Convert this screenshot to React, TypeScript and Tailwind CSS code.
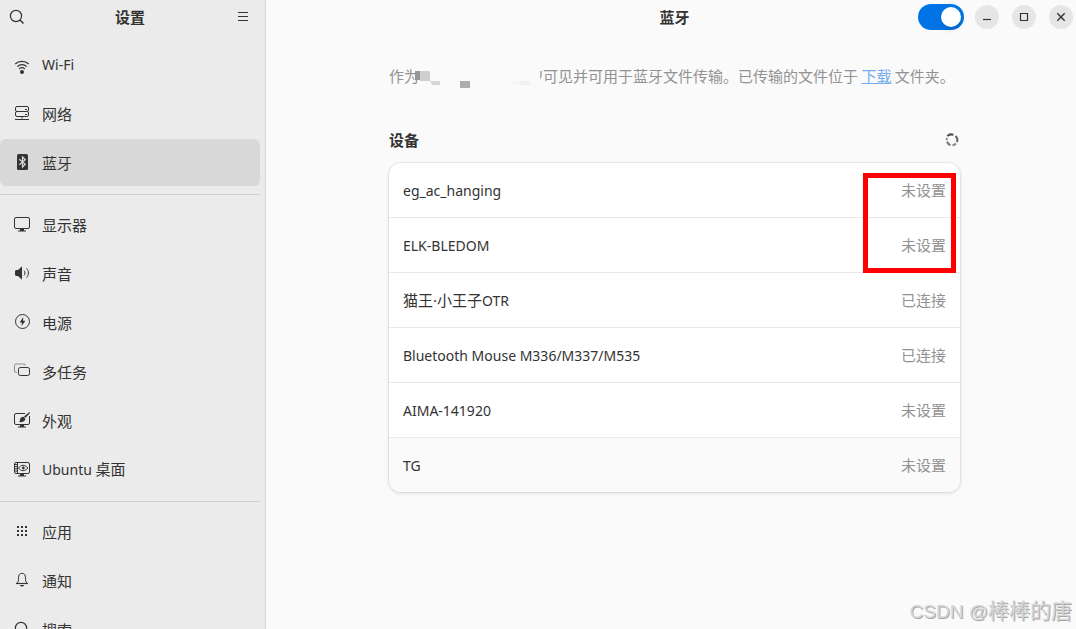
import { useState, type ReactNode } from "react";

interface NavItem {
  id: string;
  label: string;
  icon: ReactNode;
}

interface Device {
  name: string;
  status: string;
}

function Icon({ children }: { children: ReactNode }) {
  return (
    <svg
      viewBox="0 0 16 16"
      className="size-4 shrink-0 overflow-visible"
      fill="none"
      stroke="currentColor"
      strokeWidth="1"
      aria-hidden="true"
    >
      {children}
    </svg>
  );
}

const wifiIcon = (
  <Icon>
    <path d="M1.2 8C5 4.600 11 4.600 14.800 8" strokeWidth="1.300" />
    <path d="M3.300 10.600c2.600-2.600 6.800-2.600 9.400 0" strokeWidth="1.200" />
    <path d="M5.200 13c1.600-1.500 4-1.500 5.600 0" strokeWidth="1.100" />
    <circle cx="8" cy="16" r="2" fill="currentColor" stroke="none" />
  </Icon>
);

const networkIcon = (
  <Icon>
    <rect x="1.500" y="1.500" width="13" height="5" rx="1.500" />
    <rect x="1.500" y="6.500" width="13" height="5" rx="1.500" />
    <path d="M11 4.500h2M11 9.500h2M8 11.500v2M1 14.500h14" />
  </Icon>
);

const bluetoothIcon = (
  <Icon>
    <rect x="3" width="11" height="16" rx="1.500" fill="currentColor" stroke="none" />
    <path d="M5.300 5.300l6 5-2.800 2.700V3l2.800 2.700-6 5" stroke="#d8d8d8" strokeWidth="1.200" />
  </Icon>
);

const displayIcon = (
  <Icon>
    <rect x=".5" y="1.500" width="15" height="11" rx="1.500" />
    <path d="M6 13h4v1.500h2v1H4v-1h2z" fill="currentColor" stroke="none" />
  </Icon>
);

const soundIcon = (
  <Icon>
    <path
      d="M1 6.500C1 5.700 1.700 5 2.500 5H4l4-3.700v13.400L4 11H2.500C1.700 11 1 10.300 1 9.500z"
      fill="currentColor"
      stroke="none"
    />
    <path d="M10 5.500c1.300 1.500 1.300 3.500 0 5M12.500 3.300c2.600 2.700 2.600 6.700 0 9.400" />
  </Icon>
);

const powerIcon = (
  <Icon>
    <circle cx="8.500" cy="7.500" r="7" />
    <path d="M9.300 3L5.600 8.400h2.300L7.600 12l3.800-5.200H9z" fill="currentColor" stroke="none" />
  </Icon>
);

const multitaskIcon = (
  <Icon>
    <path d="M3 9.500H2A1.500 1.500 0 0 1 .5 8V2.500A1.500 1.500 0 0 1 2 1h8A1.500 1.500 0 0 1 11.500 2.500" opacity=".5" />
    <rect x="4.500" y="4.500" width="11" height="8" rx="1.800" />
  </Icon>
);

const appearanceIcon = (
  <Icon>
    <path d="M11 1.500H2A1.500 1.500 0 0 0 .5 3v8A1.500 1.500 0 0 0 2 12.500h12a1.500 1.500 0 0 0 1.500-1.500V4" />
    <path d="M6 13h4v1.500h2v1H4v-1h2z" fill="currentColor" stroke="none" />
    <path d="M15.500 0l.5 1-4.500 4.800-1.500-1.200z" fill="currentColor" stroke="none" />
    <path
      d="M9.500 4.800l1.700 1.500c.4 2.600-1.900 4.400-6.200 3.700 1.200-.6.900-1.700 1.200-2.900.3-1.500 1.700-2.400 3.300-2.300z"
      fill="currentColor"
      stroke="none"
    />
  </Icon>
);

const desktopIcon = (
  <Icon>
    <rect x=".5" y="1.500" width="15" height="11" rx="1.500" />
    <path d="M3.500 1.500v11M1 3.500h2M1 5.700h2M1 7.900h2M1 10.100h2" />
    <path d="M4.500 7c2.400-3.600 6.600-3.600 9.300 0-2.700 3.600-6.900 3.600-9.300 0z" />
    <circle cx="9.300" cy="7" r="1.400" fill="currentColor" stroke="none" />
    <path d="M6 13h4v1.500h2v1H4v-1h2z" fill="currentColor" stroke="none" />
  </Icon>
);

const appsIcon = (
  <Icon>
    <path
      d="M3 3h2v2H3zM7 3h2v2H7zM11 3h2v2h-2zM3 7h2v2H3zM7 7h2v2H7zM11 7h2v2h-2zM3 11h2v2H3zM7 11h2v2H7zM11 11h2v2h-2z"
      fill="currentColor"
      stroke="none"
    />
  </Icon>
);

const bellIcon = (
  <Icon>
    <path d="M2 11.500h12" strokeWidth="1.200" />
    <path d="M3 11.300c2.500-2.400.8-5.600 2-8.300C6 .8 10 .8 11 3c1.200 2.700-.5 5.900 2 8.300" />
    <path d="M6 13h4c-.4 2-3.600 2-4 0z" fill="currentColor" stroke="none" />
  </Icon>
);

const searchIcon = (
  <Icon>
    <circle cx="7" cy="7" r="5.600" strokeWidth="1.200" />
    <path d="M11 11l3.500 3.500" strokeWidth="1.400" />
  </Icon>
);

const NAV_GROUPS: NavItem[][] = [
  [
    { id: "wifi", label: "Wi-Fi", icon: wifiIcon },
    { id: "network", label: "网络", icon: networkIcon },
    { id: "bluetooth", label: "蓝牙", icon: bluetoothIcon },
  ],
  [
    { id: "display", label: "显示器", icon: displayIcon },
    { id: "sound", label: "声音", icon: soundIcon },
    { id: "power", label: "电源", icon: powerIcon },
    { id: "multitasking", label: "多任务", icon: multitaskIcon },
    { id: "appearance", label: "外观", icon: appearanceIcon },
    { id: "desktop", label: "Ubuntu 桌面", icon: desktopIcon },
  ],
  [
    { id: "apps", label: "应用", icon: appsIcon },
    { id: "notifications", label: "通知", icon: bellIcon },
    { id: "search", label: "搜索", icon: searchIcon },
  ],
];

const DEVICES: Device[] = [
  { name: "eg_ac_hanging", status: "未设置" },
  { name: "ELK-BLEDOM", status: "未设置" },
  { name: "猫王·小王子OTR", status: "已连接" },
  { name: "Bluetooth Mouse M336/M337/M535", status: "已连接" },
  { name: "AIMA-141920", status: "未设置" },
  { name: "TG", status: "未设置" },
];

// Latin runs sit one size below the Chinese text around them.
function MixedText({ text }: { text: string }) {
  return (
    <span>
      {text.split(/([\x20-\x7e]+)/).map((part, i) =>
        i % 2 === 1 ? (
          <span key={i} className="text-[14px]">
            {part}
          </span>
        ) : (
          part
        ),
      )}
    </span>
  );
}

function Sidebar() {
  const [active, setActive] = useState("bluetooth");

  return (
    <aside className="flex w-[266px] shrink-0 flex-col border-r border-[#d9d9d9] bg-[#ebebeb] pr-[5px]">
      <header className="flex h-[34px] shrink-0 items-center justify-between">
        <button type="button" aria-label="搜索" className="flex size-[34px] items-center justify-center">
          {searchIcon}
        </button>
        <h1 className="text-[15px] font-bold">设置</h1>
        <button type="button" aria-label="主菜单" className="flex size-[34px] items-center justify-center">
          <Icon>
            <path d="M3 3.500h10M3 7.500h10M3 11.500h10" />
          </Icon>
        </button>
      </header>
      <nav className="min-h-0 flex-1 overflow-hidden pt-[7px]">
        {NAV_GROUPS.map((group) => (
          <ul
            key={group[0].id}
            className="mb-[8px] space-y-[2px] border-[#cfcfcf] not-first:border-t not-first:pt-[6px]"
          >
            {group.map((item) => (
              <li key={item.id}>
                <button
                  type="button"
                  onClick={() => setActive(item.id)}
                  aria-current={item.id === active ? "page" : undefined}
                  className="flex h-[47px] w-full items-center gap-3 rounded-md px-[14px] text-left hover:bg-[#e0e0e0] aria-[current=page]:bg-[#d8d8d8]"
                >
                  <span className="pb-px">{item.icon}</span>
                  <MixedText text={item.label} />
                </button>
              </li>
            ))}
          </ul>
        ))}
      </nav>
    </aside>
  );
}

function WindowButton({ label, children }: { label: string; children: ReactNode }) {
  return (
    <button
      type="button"
      aria-label={label}
      className="flex size-6 items-center justify-center rounded-full bg-[#e6e6e6] hover:bg-[#dadada]"
    >
      {children}
    </button>
  );
}

function TitleBar() {
  const [enabled, setEnabled] = useState(true);

  return (
    <header className="grid h-[34px] shrink-0 grid-cols-[1fr_auto_1fr] items-center pr-[3px] pl-[10px]">
      <h2 className="col-start-2 text-[15px] font-bold">蓝牙</h2>
      <div className="flex items-center justify-end gap-[13px]">
        <input
          type="checkbox"
          role="switch"
          aria-label="蓝牙"
          checked={enabled}
          onChange={(e) => setEnabled(e.target.checked)}
          className="-mr-[2px] flex h-[26px] w-[46px] appearance-none items-center rounded-full bg-[#d0d0d0] px-[3px] before:size-5 before:rounded-full before:bg-white before:shadow-md checked:justify-end checked:bg-[#0073e5]"
        />
        <WindowButton label="最小化">
          <Icon>
            <path d="M4 10.500h8" strokeWidth="1.200" />
          </Icon>
        </WindowButton>
        <WindowButton label="最大化">
          <Icon>
            <path d="M4.500 4.500h7v7h-7z" strokeWidth="1.200" />
          </Icon>
        </WindowButton>
        <WindowButton label="关闭">
          <Icon>
            <path d="M4.300 4.300l7.400 7.400M11.700 4.300l-7.400 7.400" strokeWidth="1.400" />
          </Icon>
        </WindowButton>
      </div>
    </header>
  );
}

// Pixelated stand-in for the hidden device name
function RedactedName() {
  return (
    <svg
      viewBox="0 -5 128 20"
      className="-ml-1 h-5 w-[128px] shrink-0 overflow-visible"
      shapeRendering="crispEdges"
      aria-hidden="true"
    >
      <path fill="#969696" d="M0 0h5v9H0z" />
      <path fill="#cfcfcf" d="M5 0h10v10H5z" />
      <path fill="#d6d6d6" d="M15 10h10v4H17z" />
      <path fill="#adadad" d="M45 10h10v7H45z" />
      <path fill="#f6f6f6" d="M95 10h10v4H97z" />
      <path fill="#f1f1f1" d="M105 10h10v4h-10z" />
      <path fill="#b4b4b4" d="M125 0h2v5l-2 4z" />
    </svg>
  );
}

function Spinner() {
  return (
    <svg viewBox="0 0 16 16" className="size-4" role="img" aria-label="正在搜索设备">
      <g fill="none" stroke="#3d3d3d" strokeWidth="2">
        <path d="M3.400 4.200A5.300 5.300 0 0 1 9.400 2.900" opacity=".95" />
        <path d="M11.400 3.900A5.300 5.300 0 0 1 12.900 10" opacity=".8" />
        <path d="M12 11.500A5.300 5.300 0 0 1 8.400 13.300" opacity=".6" />
        <path d="M6.600 13.100A5.300 5.300 0 0 1 3 9.600" opacity=".7" />
        <path d="M2.700 8A5.300 5.300 0 0 1 3.100 6" opacity=".6" />
      </g>
    </svg>
  );
}

function DeviceList() {
  return (
    <div className="relative">
      <ul className="divide-y divide-[#e8e8e8] overflow-hidden rounded-xl bg-white shadow-[0_0_0_1px_rgba(0,0,0,0.04),0_1px_3px_1px_rgba(0,0,0,0.09)]">
        {DEVICES.map((d) => (
          <li key={d.name} className="last:bg-[#fafafa]">
            <button
              type="button"
              className="flex h-[54px] w-full items-center justify-between px-[14px] text-left hover:bg-[#fafafa]"
            >
              <MixedText text={d.name} />
              <span className="text-[#929292]">{d.status}</span>
            </button>
          </li>
        ))}
      </ul>
      <div className="pointer-events-none absolute top-[10px] right-[4px] h-[100px] w-[93px] border-[5px] border-[#ff0000]" />
    </div>
  );
}

export default function App() {
  return (
    <div className="relative flex h-screen overflow-hidden bg-[#fafafa] font-['Noto_Sans','Noto_Sans_CJK_SC',sans-serif] text-[15px] leading-5 text-[#333333]">
      <Sidebar />
      <main className="flex min-w-0 flex-1 flex-col">
        <TitleBar />
        <div className="min-h-0 flex-1 overflow-hidden pl-[7px]">
          <div className="mx-auto max-w-[571px] pt-8">
            <p className="flex items-center font-['Noto_Sans_CJK_SC',sans-serif] whitespace-nowrap text-[#929292]">
              作为
              <RedactedName />
              <span>
                可见并可用于蓝牙文件传输。已传输的文件位于{" "}
                <a href="#downloads" className="text-[#74aeec] underline underline-offset-1">
                  下载
                </a>{" "}
                文件夹。
              </span>
            </p>
            <div className="mt-11 mb-[13px] flex items-center justify-between">
              <h3 className="font-bold">设备</h3>
              <Spinner />
            </div>
            <DeviceList />
          </div>
        </div>
      </main>
      <div className="pointer-events-none absolute right-1 bottom-[3px] font-['Liberation_Sans','Noto_Sans_CJK_SC',sans-serif] text-[19px] leading-7 text-[#d6d6d6] [text-shadow:1px_1px_0_#a8a8a8]">
        CSDN @<span className="text-[21px]">棒棒的唐</span>
      </div>
    </div>
  );
}
